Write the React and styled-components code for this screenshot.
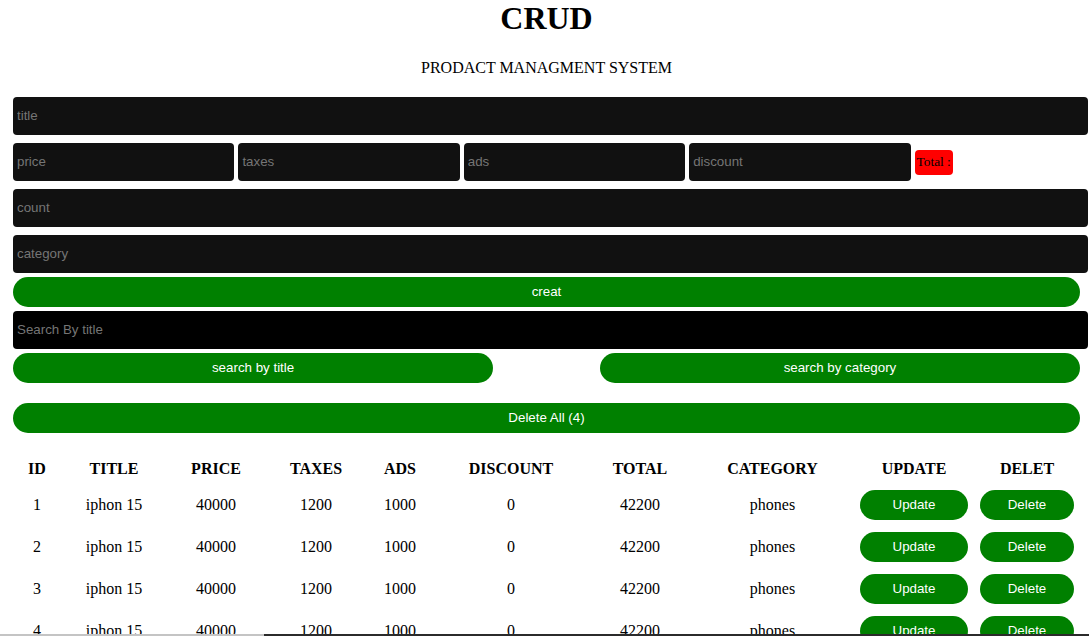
import React from "react";
import styled, { createGlobalStyle } from "styled-components";

const GlobalStyle = createGlobalStyle`
  html, body {
    margin: 0;
    padding: 0;
    background: #fff;
    overflow: hidden;
  }
  body {
    font-family: "Liberation Serif", "Times New Roman", serif;
    color: #000;
  }
`;

const Page = styled.div`
  width: 1067px;
  padding-left: 13px;
`;

const Heading = styled.div`
  text-align: center;
`;

const Title = styled.h1`
  margin: 0;
  font-size: 32px;
  line-height: 37px;
  font-weight: bold;
`;

const Subtitle = styled.p`
  margin: 22px 0 16px;
  font-size: 16px;
  line-height: 18px;
`;

const Form = styled.div`
  display: flex;
  flex-direction: column;
`;

const Field = styled.input`
  box-sizing: content-box;
  display: block;
  width: ${(p) => p.$w || "100%"};
  height: 30px;
  padding: 3px 4px 5px;
  margin: ${(p) => (p.$inline ? "0" : "4px 0")};
  border: none;
  border-radius: 4px;
  outline: none;
  background: ${(p) => (p.$dark ? "#000" : "#111")};
  color: #fff;
  caret-color: #fff;
  font-family: "Liberation Sans", Arial, sans-serif;
  font-size: 13.33px;
  &::placeholder {
    color: #757575;
  }
`;

const PriceRow = styled.div`
  display: flex;
  align-items: center;
  gap: 4px;
  margin: 4px 0;
`;

const Total = styled.small`
  display: inline-block;
  padding: 4px 2px 6px;
  border-radius: 4px;
  background: #ff0000;
  color: #000;
  font-family: "Liberation Serif", "Times New Roman", serif;
  font-size: 13.33px;
  line-height: 15px;
`;

const Button = styled.button`
  box-sizing: border-box;
  width: ${(p) => p.$w || "100%"};
  height: 30px;
  border: none;
  border-radius: 15px;
  background: #008000;
  color: #fff;
  font-family: "Liberation Sans", Arial, sans-serif;
  font-size: 13.33px;
  padding: 0 0 2px;
  cursor: pointer;
`;

const SearchButtons = styled.div`
  display: flex;
  justify-content: space-between;
  margin-bottom: 20px;
`;

const Table = styled.table`
  width: 1067px;
  table-layout: fixed;
  border-collapse: collapse;
  margin-top: 20px;
  text-align: center;
  font-size: 16px;
`;

const Col = styled.col`
  width: ${(p) => p.$w}px;
`;

const HeadCell = styled.th`
  height: 31px;
  padding: 0;
  font-weight: bold;
  vertical-align: middle;
`;

const Cell = styled.td`
  height: 42px;
  padding: 0 ${(p) => p.$px || 0}px;
  vertical-align: middle;
`;

const BottomBar = styled.div`
  position: fixed;
  left: 0;
  right: 0;
  bottom: 0;
  height: 2px;
  display: flex;
`;

const BarSegment = styled.div`
  width: ${(p) => p.$w || "auto"};
  flex: ${(p) => (p.$grow ? 1 : "none")};
  background: ${(p) => p.$c};
`;

const columns = [
  ["ID", 48],
  ["TITLE", 106],
  ["PRICE", 98],
  ["TAXES", 102],
  ["ADS", 66],
  ["DISCOUNT", 156],
  ["TOTAL", 102],
  ["CATEGORY", 163],
  ["UPDATE", 120],
  ["DELET", 106],
];

const rows = [1, 2, 3, 4].map((id) => ({
  id,
  title: "iphon 15",
  price: 40000,
  taxes: 1200,
  ads: 1000,
  discount: 0,
  total: 42200,
  category: "phones",
}));

export default function App() {
  return (
    <>
      <GlobalStyle />
      <Page>
        <Heading>
          <Title>CRUD</Title>
          <Subtitle>PRODACT MANAGMENT SYSTEM</Subtitle>
        </Heading>
        <Form>
          <Field placeholder="title" />
          <PriceRow>
            <Field $inline $w="20%" placeholder="price" />
            <Field $inline $w="20%" placeholder="taxes" />
            <Field $inline $w="20%" placeholder="ads" />
            <Field $inline $w="20%" placeholder="discount" />
            <Total>Total :</Total>
          </PriceRow>
          <Field placeholder="count" />
          <Field placeholder="category" />
          <Button>creat</Button>
          <Field $dark placeholder="Search By title" autoFocus />
          <SearchButtons>
            <Button $w="45%">search by title</Button>
            <Button $w="45%">search by category</Button>
          </SearchButtons>
          <Button>Delete All (4)</Button>
        </Form>
        <Table>
          <colgroup>
            {columns.map(([name, w]) => (
              <Col key={name} $w={w} />
            ))}
          </colgroup>
          <thead>
            <tr>
              {columns.map(([name]) => (
                <HeadCell key={name}>{name}</HeadCell>
              ))}
            </tr>
          </thead>
          <tbody>
            {rows.map((r) => (
              <tr key={r.id}>
                <Cell>{r.id}</Cell>
                <Cell>{r.title}</Cell>
                <Cell>{r.price}</Cell>
                <Cell>{r.taxes}</Cell>
                <Cell>{r.ads}</Cell>
                <Cell>{r.discount}</Cell>
                <Cell>{r.total}</Cell>
                <Cell>{r.category}</Cell>
                <Cell $px={6}>
                  <Button>Update</Button>
                </Cell>
                <Cell $px={6}>
                  <Button>Delete</Button>
                </Cell>
              </tr>
            ))}
          </tbody>
        </Table>
      </Page>
      <BottomBar>
        <BarSegment $w="264px" $c="#c4c4c4" />
        <BarSegment $grow $c="#2b2b2b" />
      </BottomBar>
    </>
  );
}
